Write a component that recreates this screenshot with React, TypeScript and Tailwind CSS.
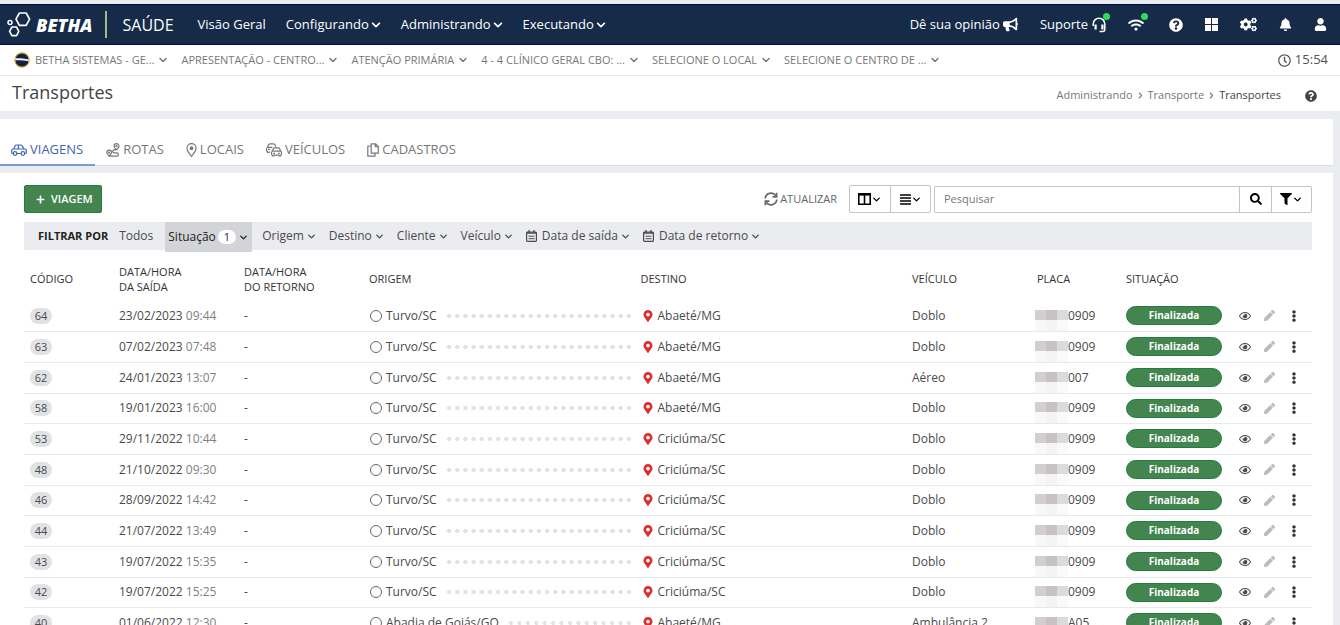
import type { ReactNode } from "react";
import {
  FaBell,
  FaBullhorn,
  FaChevronDown,
  FaChevronRight,
  FaCogs,
  FaEllipsisV,
  FaFilter,
  FaMapMarkerAlt,
  FaPen,
  FaPlus,
  FaQuestionCircle,
  FaRegClock,
  FaRegEye,
  FaSearch,
  FaUser,
  FaWifi,
} from "react-icons/fa";
import { FiChevronDown } from "react-icons/fi";

const menus = [
  { label: "Visão Geral", dropdown: false },
  { label: "Configurando", dropdown: true },
  { label: "Administrando", dropdown: true },
  { label: "Executando", dropdown: true },
];

const contexts = [
  "BETHA SISTEMAS - GE...",
  "APRESENTAÇÃO - CENTRO...",
  "ATENÇÃO PRIMÁRIA",
  "4 - 4 CLÍNICO GERAL CBO: ...",
  "SELECIONE O LOCAL",
  "SELECIONE O CENTRO DE ...",
];

const trips = [
  { id: 64, date: "23/02/2023", time: "09:44", from: "Turvo/SC", to: "Abaeté/MG", vehicle: "Doblo", plate: "0909" },
  { id: 63, date: "07/02/2023", time: "07:48", from: "Turvo/SC", to: "Abaeté/MG", vehicle: "Doblo", plate: "0909" },
  { id: 62, date: "24/01/2023", time: "13:07", from: "Turvo/SC", to: "Abaeté/MG", vehicle: "Aéreo", plate: "007" },
  { id: 58, date: "19/01/2023", time: "16:00", from: "Turvo/SC", to: "Abaeté/MG", vehicle: "Doblo", plate: "0909" },
  { id: 53, date: "29/11/2022", time: "10:44", from: "Turvo/SC", to: "Criciúma/SC", vehicle: "Doblo", plate: "0909" },
  { id: 48, date: "21/10/2022", time: "09:30", from: "Turvo/SC", to: "Criciúma/SC", vehicle: "Doblo", plate: "0909" },
  { id: 46, date: "28/09/2022", time: "14:42", from: "Turvo/SC", to: "Criciúma/SC", vehicle: "Doblo", plate: "0909" },
  { id: 44, date: "21/07/2022", time: "13:49", from: "Turvo/SC", to: "Criciúma/SC", vehicle: "Doblo", plate: "0909" },
  { id: 43, date: "19/07/2022", time: "15:35", from: "Turvo/SC", to: "Criciúma/SC", vehicle: "Doblo", plate: "0909" },
  { id: 42, date: "19/07/2022", time: "15:25", from: "Turvo/SC", to: "Criciúma/SC", vehicle: "Doblo", plate: "0909" },
  { id: 40, date: "01/06/2022", time: "12:30", from: "Abadia de Goiás/GO", to: "Abaeté/MG", vehicle: "Ambulância 2", plate: "A05" },
];

function Logo() {
  return (
    <svg width="24" height="28" viewBox="0 0 24 28" fill="none" stroke="#fff" aria-hidden="true">
      <path d="M12.400 2h6.800l3.400 6.200-3.400 6.200h-6.800L9 8.200z" strokeWidth="1.700" strokeLinejoin="round" />
      <path d="M4.900 16h4.600l2.300 4.300-2.300 4.300H4.900l-2.300-4.300z" strokeWidth="1.600" strokeLinejoin="round" />
      <circle cx="3" cy="11.500" r="2" strokeWidth="1.500" />
    </svg>
  );
}

function Crest() {
  return (
    <svg width="16" height="16" viewBox="0 0 16 16" aria-hidden="true">
      <circle cx="8" cy="8" r="7.200" fill="#14204a" stroke="#d9b92e" strokeWidth="1.200" />
      <path d="M1.200 6.200c4-.2 9 .2 13.600 1.200v1.800C10.200 8.300 5.200 8 1.200 8.200z" fill="#f4f4f4" />
    </svg>
  );
}

function Headset() {
  return (
    <svg width="14" height="16" viewBox="0 0 14 16" fill="none" stroke="#fff" aria-hidden="true">
      <path d="M1.200 9V7a5.800 5.800 0 0 1 11.600 0v5.500q0 2-2 2H7.500" strokeWidth="1.500" />
      <path d="M3.600 7.500v5M10.400 7.500v5" strokeWidth="2.200" />
    </svg>
  );
}

function TabIcon({ children, width = 16 }: { children: ReactNode; width?: number }) {
  return (
    <svg
      width={width}
      height="14"
      viewBox={`0 0 ${width} 14`}
      fill="none"
      stroke="currentColor"
      strokeWidth="1.200"
      strokeLinecap="round"
      strokeLinejoin="round"
      aria-hidden="true"
    >
      {children}
    </svg>
  );
}

const carIcon = (
  <TabIcon>
    <path d="M2.200 10.500H1.500Q.7 10.500.7 9.700V7.500Q.7 6 2.200 6H13.800Q15.300 6 15.300 7.500V9.700Q15.300 10.500 14.500 10.500H13.800M6 10.500h4M2.700 6 4 3Q4.400 2 5.400 2H9.600Q10.400 2 10.900 2.700L13.200 6M7.400 2v4" />
    <circle cx="4.100" cy="10.500" r="1.800" />
    <circle cx="11.900" cy="10.500" r="1.800" />
  </TabIcon>
);

const routeIcon = (
  <TabIcon width={14}>
    <path d="M10.500 6.800Q8 4.600 8 3.200a2.500 2.500 0 0 1 5 0q0 1.400-2.500 3.600zH8.200a1.500 1.500 0 0 0 0 3h2.600a1.600 1.600 0 0 1 0 3.300H3.200Q.8 11 .8 9.600a2.400 2.400 0 0 1 4.800 0Q5.600 11 3.200 13.100" />
    <circle cx="10.500" cy="3.200" r=".5" />
    <circle cx="3.200" cy="9.600" r=".5" />
  </TabIcon>
);

const placeIcon = (
  <TabIcon width={11}>
    <path d="M5.500 13.300Q1 8 1 5.200a4.500 4.500 0 0 1 9 0q0 2.800-4.500 8.100z" />
    <circle cx="5.500" cy="5.200" r="1.300" fill="currentColor" />
  </TabIcon>
);

const carsIcon = (
  <TabIcon>
    <path d="M3.200 8.800v.7H1.500V8.600Q.6 8.300.6 7.300V5.700Q.6 4.600 1.600 4.300L2.400 2Q2.800.8 4 .8H7.600Q8.800.8 9.200 2l.5 1.300M1.600 4.300H6M2.600 6.400h1" />
    <path d="M6.300 8.200 7.200 6Q7.600 4.900 8.800 4.900h3.400q1.200 0 1.600 1.100l.9 2.200Q15.500 8.600 15.500 9.600v1.500q0 .8-.8 1V13h-1.600v-.9H7.900V13H6.300v-.9q-.8-.2-.8-1V9.600q0-1 .8-1.400zh8.400M7.500 10.300h1M12.500 10.300h1" />
  </TabIcon>
);

const filesIcon = (
  <TabIcon width={12}>
    <path d="M4.200.8H8.500L11.300 3.400V10.200H4.200zM8.300.8V3.600H11.300M4.200 3H.8V13.200H8V10.200" />
  </TabIcon>
);

const tabs = [
  { label: "VIAGENS", icon: carIcon, active: true },
  { label: "ROTAS", icon: routeIcon, active: false },
  { label: "LOCAIS", icon: placeIcon, active: false },
  { label: "VEÍCULOS", icon: carsIcon, active: false },
  { label: "CADASTROS", icon: filesIcon, active: false },
];

function CalendarIcon() {
  return (
    <svg width="11" height="12" viewBox="0 0 11 12" fill="none" stroke="currentColor" aria-hidden="true">
      <rect x=".6" y="2" width="9.800" height="9.400" rx="1" strokeWidth="1.200" />
      <path d="M3 0v2.500M8 0v2.500M.6 3h9.800" strokeWidth="1.300" />
      <path d="M2.500 6.200h6M2.500 8.700h6" strokeWidth="1" />
    </svg>
  );
}

function RefreshIcon() {
  return (
    <svg width="14" height="14" viewBox="0 0 14 14" fill="none" stroke="currentColor" strokeWidth="1.700" aria-hidden="true">
      <path d="M1.200 6.500A5.800 5.800 0 0 1 11.800 3.800M12.800 7.500A5.800 5.800 0 0 1 2.200 10.200" />
      <path d="M12.600.8v4H8.600M1.400 13.200v-4h4" />
    </svg>
  );
}

function NavBar() {
  return (
    <header className="flex h-[41px] shrink-0 items-center justify-between border-y border-[#03093a] bg-[#152b48] pl-[7px] pr-[13px] text-[13px] text-white">
      <div className="flex items-center">
        <a href="#" className="flex items-center gap-[5px]">
          <Logo />
          <span className="text-lg font-extrabold italic">BETHA</span>
        </a>
        <span className="ml-[13px] h-[27px] w-[2px] bg-[#a3b98b]" />
        <span className="ml-[15px] text-base">SAÚDE</span>
        <nav className="ml-6 flex items-center gap-5 font-medium">
          {menus.map((m) => (
            <button key={m.label} className="flex items-center gap-[2px]">
              {m.label}
              {m.dropdown && <FaChevronDown size={10} />}
            </button>
          ))}
        </nav>
      </div>
      <div className="flex items-center gap-[22px] font-medium">
        <button className="flex items-center gap-[3px]">
          Dê sua opinião
          <FaBullhorn size={15} />
        </button>
        <button className="flex items-center gap-1">
          Suporte
          <span className="relative">
            <Headset />
            <span className="absolute -right-1 -top-1 size-[7px] rounded-full bg-[#2fdc5c]" />
          </span>
        </button>
        <button aria-label="Conexão" className="relative mr-[3px]">
          <FaWifi size={16} />
          <span className="absolute -right-1 -top-1 size-[7px] rounded-full bg-[#2fdc5c]" />
        </button>
        <button aria-label="Ajuda">
          <FaQuestionCircle size={14} />
        </button>
        <button aria-label="Aplicações" className="grid grid-cols-2 gap-px">
          <span className="size-[6px] bg-white" />
          <span className="size-[6px] bg-white" />
          <span className="size-[6px] bg-white" />
          <span className="size-[6px] bg-white" />
        </button>
        <button aria-label="Configurações">
          <FaCogs size={17} />
        </button>
        <button aria-label="Notificações">
          <FaBell size={13} />
        </button>
        <button aria-label="Usuário">
          <FaUser size={13} />
        </button>
      </div>
    </header>
  );
}

function ContextBar() {
  return (
    <div className="flex h-[31px] shrink-0 items-center border-b border-[#e6e7ea] bg-white pl-[14px] pr-3 text-[11px] text-[#777]">
      <div className="flex flex-1 items-center gap-3">
        {contexts.map((c, i) => (
          <button key={c} className="flex items-center gap-[3px]">
            {i === 0 && (
              <span className="mr-[2px]">
                <Crest />
              </span>
            )}
            {c}
            <FiChevronDown size={12} strokeWidth={3} />
          </button>
        ))}
      </div>
      <span className="flex items-center gap-1 text-[13px] text-[#555]">
        <FaRegClock size={13} />
        15:54
      </span>
    </div>
  );
}

function PageTitle() {
  return (
    <div className="flex h-[35px] shrink-0 items-center justify-between bg-white pl-3 pr-[23px]">
      <h1 className="pb-1 text-lg text-[#444]">Transportes</h1>
      <nav className="flex items-center gap-1 pt-1 text-[11px] text-[#777]">
        <a href="#">Administrando</a>
        <FaChevronRight size={7} />
        <a href="#">Transporte</a>
        <FaChevronRight size={7} />
        <span className="text-[#444]">Transportes</span>
        <button aria-label="Ajuda da página" className="ml-5 text-[#444]">
          <FaQuestionCircle size={12} />
        </button>
      </nav>
    </div>
  );
}

function Toolbar() {
  return (
    <div className="flex items-center justify-between">
      <button className="flex h-7 items-center gap-[6px] rounded-[2px] border border-[#1d8040] bg-[#43844f] pl-[11px] pr-2 text-[11px] font-semibold text-white">
        <FaPlus size={9} />
        VIAGEM
      </button>
      <div className="flex items-center">
        <button className="mr-3 flex items-center gap-[2px] text-[11px] text-[#666]">
          <RefreshIcon />
          ATUALIZAR
        </button>
        <div className="mr-[3px] flex h-7 rounded-[2px] border border-[#c4c4c4] text-black">
          <button aria-label="Colunas" className="flex w-[41px] items-center justify-center border-r border-[#c4c4c4]">
            <svg width="13" height="12" viewBox="0 0 13 12" fill="none" stroke="currentColor" aria-hidden="true">
              <path d="M.8 1h11.400v10.200H.8zM6.500 1v10" strokeWidth="1.600" />
              <path d="M0 1.300h13" strokeWidth="2.600" />
            </svg>
            <FiChevronDown size={11} strokeWidth={3} />
          </button>
          <button aria-label="Densidade" className="flex w-[39px] items-center justify-center">
            <svg width="11" height="11" viewBox="0 0 11 11" stroke="currentColor" strokeWidth="1.500" aria-hidden="true">
              <path d="M0 1h11M0 4h11M0 7h11M0 10h11" />
            </svg>
            <FiChevronDown size={11} strokeWidth={3} />
          </button>
        </div>
        <div className="flex h-[27px] rounded-[2px] border border-[#c4c4c4] text-black">
          <input
            type="search"
            aria-label="Pesquisar"
            placeholder="Pesquisar"
            className="w-[304px] px-[9px] text-[11px] outline-none placeholder:text-[#777]"
          />
          <button aria-label="Buscar" className="flex w-8 items-center justify-center border-l border-[#c4c4c4]">
            <FaSearch size={12} />
          </button>
          <button aria-label="Filtros" className="flex w-10 items-center justify-center border-l border-[#c4c4c4]">
            <FaFilter size={12} />
            <FiChevronDown size={11} strokeWidth={3} />
          </button>
        </div>
      </div>
    </div>
  );
}

function FilterButton({ label, calendar }: { label: string; calendar?: boolean }) {
  return (
    <button className="flex items-center gap-[2px]">
      {calendar && (
        <span className="mr-[3px]">
          <CalendarIcon />
        </span>
      )}
      {label}
      <FiChevronDown size={11} strokeWidth={3} />
    </button>
  );
}

function FilterBar() {
  return (
    <div className="mt-[9px] flex h-7 items-center bg-[#ebecf0] pl-[14px] text-xs text-[#4a4a4a]">
      <span className="text-[11px] font-bold text-[#222]">FILTRAR POR</span>
      <button className="ml-[11px]">Todos</button>
      <button className="ml-3 flex h-[30px] items-center gap-[2px] self-start bg-[#d3d4d7] px-[3px] text-[#222]">
        Situação
        <span className="rounded-full bg-white px-[6px] text-[11px] leading-[14px]">1</span>
        <FiChevronDown size={11} strokeWidth={3} />
      </button>
      <div className="ml-[10px] flex items-center gap-3">
        <FilterButton label="Origem" />
        <FilterButton label="Destino" />
        <FilterButton label="Cliente" />
        <FilterButton label="Veículo" />
        <FilterButton label="Data de saída" calendar />
        <FilterButton label="Data de retorno" calendar />
      </div>
    </div>
  );
}

function MaskedPlate({ ending }: { ending: string }) {
  return (
    <div className="flex leading-3">
      <div className="grid w-[33px] shrink-0 grid-cols-3">
        <span className="h-[10px] bg-[#d3cfcf]" />
        <span className="h-[10px] bg-[#c6c2c5]" />
        <span className="h-[10px] bg-[#dadbdc]" />
        <span className="h-[11px] bg-[#f8f8f8]" />
        <span className="h-[11px] bg-[#f4f4f4]" />
        <span className="h-[11px] bg-[#fafafa]" />
      </div>
      {ending}
    </div>
  );
}

function TripsTable() {
  return (
    <table className="mt-[6px] w-full table-fixed border-collapse text-left text-xs text-[#4a4a4a]">
      <colgroup>
        <col className="w-[89px]" />
        <col className="w-[125px]" />
        <col className="w-[125px]" />
        <col />
        <col />
        <col className="w-[125px]" />
        <col className="w-[89px]" />
        <col className="w-[108px]" />
        <col className="w-[84px]" />
      </colgroup>
      <thead>
        <tr className="h-[45px] text-[11px] leading-[15px] text-[#333] [&>th]:px-[6px] [&>th]:py-0 [&>th]:font-medium">
          <th>CÓDIGO</th>
          <th>
            DATA/HORA
            <br />
            DA SAÍDA
          </th>
          <th>
            DATA/HORA
            <br />
            DO RETORNO
          </th>
          <th>ORIGEM</th>
          <th>DESTINO</th>
          <th>VEÍCULO</th>
          <th>PLACA</th>
          <th>SITUAÇÃO</th>
          <td />
        </tr>
      </thead>
      <tbody>
        {trips.map((t) => (
          <tr key={t.id} className="h-[31px] whitespace-nowrap border-b border-[#e8e9eb] nth-[3n+1]:h-[30px] [&>td]:py-0">
            <td className="px-[6px]">
              <span className="block w-[22px] rounded-full bg-[#e0e2e6] text-center text-[11px] leading-4">{t.id}</span>
            </td>
            <td className="px-[6px]">
              {t.date} <span className="text-[#808080]">{t.time}</span>
            </td>
            <td className="px-[6px]">-</td>
            <td className="pl-[7px] pr-[2px]">
              <div className="flex items-center">
                <span className="mr-1 size-3 rounded-full border border-[#666]" />
                {t.from}
                <span className="ml-2 h-2 flex-1 bg-[radial-gradient(circle,#e0e2e6_2px,transparent_2px)] bg-size-[8px_8px] bg-repeat-space" />
              </div>
            </td>
            <td className="pl-[7px] pr-[6px]">
              <div className="flex items-center gap-1">
                <FaMapMarkerAlt size={12} className="text-[#d93030]" />
                {t.to}
              </div>
            </td>
            <td className="px-[6px]">{t.vehicle}</td>
            <td className="pl-1 align-bottom">
              <MaskedPlate ending={t.plate} />
            </td>
            <td className="px-[6px]">
              <span className="block rounded-full border border-[#1d8040] bg-[#43844f] text-center text-[10px] font-bold leading-[17px] text-white">
                Finalizada
              </span>
            </td>
            <td className="pl-[11px]">
              <div className="flex items-center gap-[13px]">
                <button aria-label={`Visualizar viagem ${t.id}`}>
                  <FaRegEye size={12} />
                </button>
                <button aria-label={`Editar viagem ${t.id}`} className="text-[#bbb]">
                  <FaPen size={11} />
                </button>
                <button aria-label={`Mais opções da viagem ${t.id}`} className="text-[#333]">
                  <FaEllipsisV size={12} />
                </button>
              </div>
            </td>
          </tr>
        ))}
      </tbody>
    </table>
  );
}

export default function App() {
  return (
    <div className="flex h-screen flex-col overflow-hidden bg-[#ebecf0] pt-1 font-['Open_Sans',sans-serif]">
      <NavBar />
      <ContextBar />
      <PageTitle />
      <main className="mt-2 flex min-h-0 flex-1 flex-col pr-[7px]">
        <nav className="flex h-[47px] shrink-0 items-end border-b border-[#dcdde1] bg-white text-[13px] text-[#777]">
          {tabs.map((tab) => (
            <a
              key={tab.label}
              href="#"
              className={
                tab.active
                  ? "-mb-px flex h-[31px] items-center gap-[3px] border-b-2 border-[#7d9bd0] pl-[11px] pr-3 text-[#3f66b0]"
                  : "flex h-[30px] items-center gap-[3px] px-[11px]"
              }
            >
              {tab.icon}
              {tab.label}
            </a>
          ))}
        </nav>
        <section className="mt-[7px] min-h-0 flex-1 overflow-hidden bg-white pl-6 pr-[21px] pt-3">
          <Toolbar />
          <FilterBar />
          <TripsTable />
        </section>
      </main>
    </div>
  );
}
